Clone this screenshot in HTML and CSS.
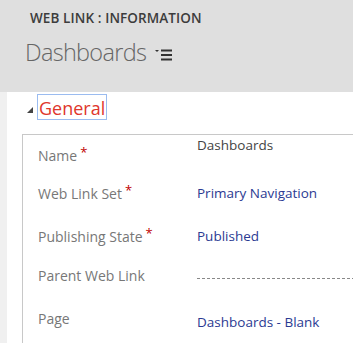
FILE: index.html
```html
<!DOCTYPE html>
<html lang="en">
<head>
  <meta charset="UTF-8">
  <title>Web Link : Information</title>
  <link rel="stylesheet" href="styles.css">
</head>
<body>

  <div class="header">
    <div class="entity">WEB LINK : INFORMATION</div>
    <div class="record">
      <span class="record-name">Dashboards</span>
      <svg class="menu-icon" width="18" height="12" viewBox="0 0 18 12">
        <polygon points="0,1 4,1 2,3" fill="#333"/>
        <rect x="6" y="0.5" width="11" height="2" fill="#333"/>
        <rect x="6" y="5" width="11" height="2" fill="#333"/>
        <rect x="6" y="9.5" width="11" height="2" fill="#333"/>
      </svg>
    </div>
  </div>

  <div class="main">
    <div class="strip"></div>
    <div class="panel">
      <div class="section-head">
        <svg class="toggle" width="6" height="6" viewBox="0 0 6 6">
          <polygon points="6,0 6,6 0,6" fill="#444"/>
        </svg>
        <span class="section-title">General</span>
      </div>

      <div class="form">
        <div class="row first">
          <div class="label">Name<span class="req">*</span></div>
          <div class="value plain raised">Dashboards</div>
        </div>
        <div class="row">
          <div class="label">Web Link Set<span class="req">*</span></div>
          <div class="value">Primary Navigation</div>
        </div>
        <div class="row">
          <div class="label">Publishing State<span class="req">*</span></div>
          <div class="value">Published</div>
        </div>
        <div class="row">
          <div class="label">Parent Web Link</div>
          <div class="value empty"></div>
        </div>
        <div class="row">
          <div class="label">Page</div>
          <div class="value">Dashboards - Blank</div>
        </div>
      </div>
    </div>
  </div>

</body>
</html>
```

FILE: styles.css
```css
body {
  margin: 0;
  font-family: "Open Sans", "Noto Sans", sans-serif;
  background: #f0f0f0;
  overflow: hidden;
}

/* Header */
.header {
  height: 92px;
  background: #dfdfdf;
  box-sizing: border-box;
  padding: 8px 0 0 30px;
}

.entity {
  font-size: 13.5px;
  font-weight: 600;
  color: #3c3c3c;
  line-height: 20px;
  letter-spacing: 0.1px;
}

.record {
  display: flex;
  align-items: center;
  margin-left: -5px;
  margin-top: 7px;
  height: 34px;
}

.record-name {
  font-size: 23.5px;
  font-weight: 300;
  color: #666;
  letter-spacing: -0.7px;
}

.menu-icon {
  margin-left: 9px;
  margin-top: 5px;
}

/* Body */
.main {
  display: flex;
  height: 251px;
}

.strip {
  width: 7px;
  background: #f0f0f0;
}

.panel {
  flex: 1;
  display: flex;
  flex-direction: column;
  background: #fff;
  overflow: hidden;
}

.section-head {
  display: flex;
  flex-shrink: 0;
  align-items: center;
  height: 30px;
  margin-bottom: 12px;
  padding-left: 20px;
}

.toggle {
  margin-top: 5px;
}

.section-title {
  margin-left: 4px;
  padding: 2px 1px 0;
  border: 1px solid #9bbcf0;
  font-size: 18px;
  line-height: 22px;
  color: #e0362c;
}

.form {
  flex: 1;
  min-height: 0;
  margin-left: 15px;
  border-top: 1px solid #c8c8c8;
  border-left: 1px solid #c8c8c8;
}

.row {
  display: flex;
  height: 43px;
  box-sizing: border-box;
  padding: 7px 0 0 15px;
  font-size: 13.5px;
  line-height: 20px;
}

.row.first {
  height: 38px;
}

.label {
  width: 159px;
  flex-shrink: 0;
  color: #777;
  font-size: 14px;
}

.req {
  color: #c00000;
  font-size: 13px;
  vertical-align: 4px;
  margin-left: 3px;
}

.value {
  margin-top: 3px;
  color: #2b3a92;
}

.value.plain {
  color: #444;
}

.value.raised {
  margin-top: -7px;
}

.value.empty {
  flex: 1;
  margin-top: 12px;
  height: 1px;
  background: repeating-linear-gradient(to right, #888 0 3px, transparent 3px 5px);
}
```
